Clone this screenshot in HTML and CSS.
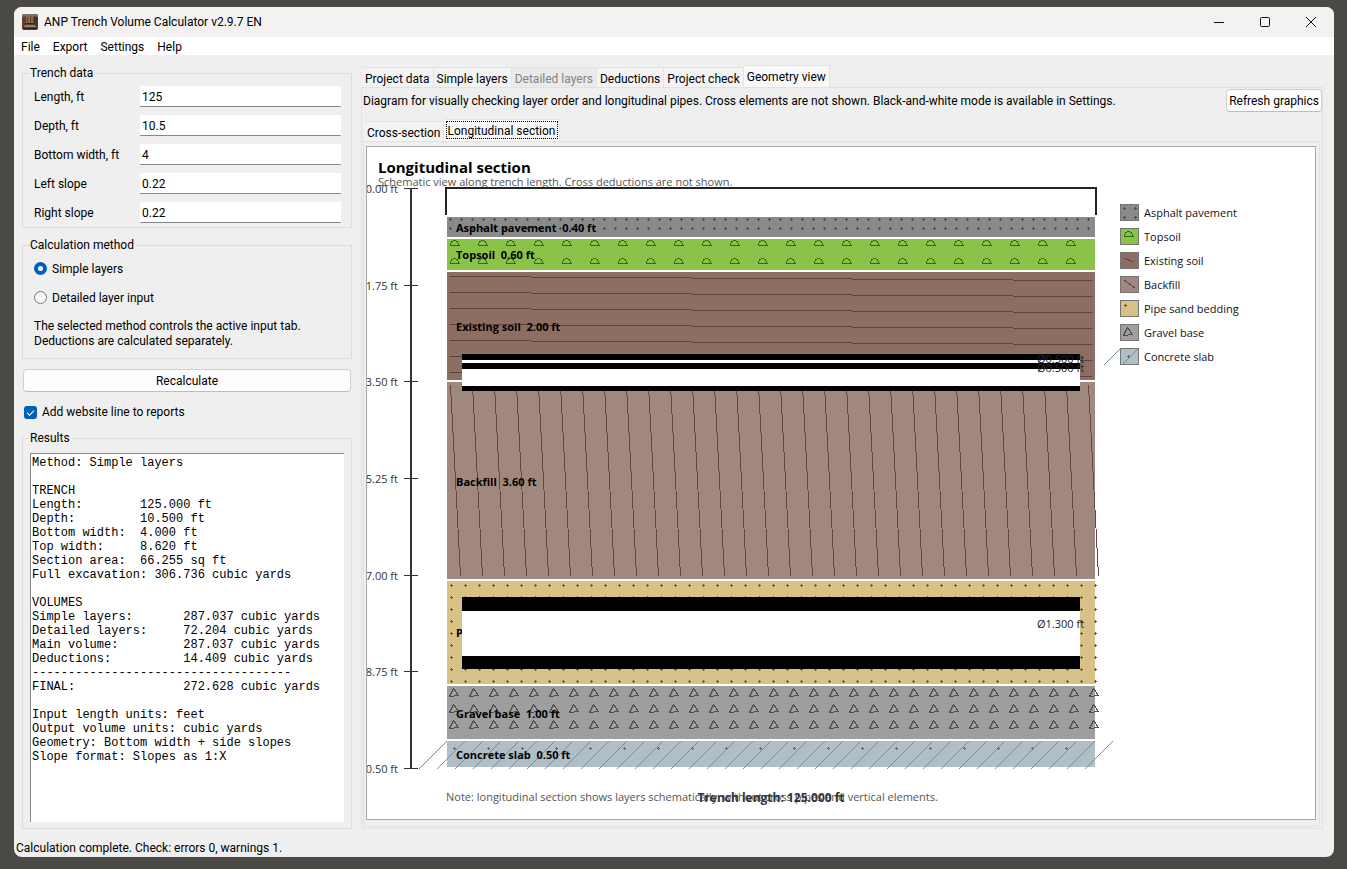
FILE: index.html
```html
<!DOCTYPE html>
<html lang="en">
<head>
<meta charset="utf-8">
<title>ANP Trench Volume Calculator v2.9.7 EN</title>
<link rel="stylesheet" href="styles.css">
</head>
<body>
<div class="window">
  <header class="titlebar">
    <svg class="app-icon" width="16" height="16" viewBox="0 0 16 16" aria-hidden="true">
      <rect width="16" height="16" rx="2" fill="#4f3d30"/>
      <path d="M0 2a2 2 0 0 1 2-2h12a2 2 0 0 1 2 2v2H0z" fill="#77726a"/>
      <path d="M0 3l4-1v8l-4 3z" fill="#5f432e"/>
      <path d="M16 3l-4-1v8l4 3z" fill="#4a3424"/>
      <path d="M4 2h8v7H4z" fill="#8c6a4a"/>
      <path d="M5 3h1v5H5zM8 2h1v6H8zM11 3h1v5h-1z" fill="#5d4028"/>
      <path d="M4 9h8l1 1H3z" fill="#2b201a"/>
      <path d="M3 11h10l1 2H2z" fill="#8f8273"/>
      <path d="M1 14h14v1H1z" fill="#2d211b"/>
    </svg>
    <h1 class="window-title">ANP Trench Volume Calculator v2.9.7 EN</h1>
    <div class="window-controls">
      <button type="button" class="control" aria-label="Minimize"><svg width="12" height="12" viewBox="0 0 12 12"><path d="M1 6.5h10"/></svg></button>
      <button type="button" class="control" aria-label="Maximize"><svg width="12" height="12" viewBox="0 0 12 12"><rect x="1.5" y="1.5" width="9" height="9" rx="1"/></svg></button>
      <button type="button" class="control" aria-label="Close"><svg width="12" height="12" viewBox="0 0 12 12"><path d="M1 1l10 10M11 1L1 11"/></svg></button>
    </div>
  </header>

  <nav class="menubar">
    <button type="button">File</button>
    <button type="button">Export</button>
    <button type="button">Settings</button>
    <button type="button">Help</button>
  </nav>

  <div class="workspace">
    <aside class="sidebar">
      <fieldset class="group trench">
        <legend>Trench data</legend>
        <div class="field"><label for="length">Length, ft</label><input id="length" type="text" value="125"></div>
        <div class="field"><label for="depth">Depth, ft</label><input id="depth" type="text" value="10.5"></div>
        <div class="field"><label for="bottom">Bottom width, ft</label><input id="bottom" type="text" value="4"></div>
        <div class="field"><label for="left">Left slope</label><input id="left" type="text" value="0.22"></div>
        <div class="field"><label for="right">Right slope</label><input id="right" type="text" value="0.22"></div>
      </fieldset>

      <fieldset class="group method">
        <legend>Calculation method</legend>
        <label class="option"><input type="radio" name="method" checked>Simple layers</label>
        <label class="option"><input type="radio" name="method">Detailed layer input</label>
        <p class="hint">The selected method controls the active input tab.<br>Deductions are calculated separately.</p>
      </fieldset>

      <button type="button" class="button recalculate">Recalculate</button>
      <label class="website"><input type="checkbox" checked>Add website line to reports</label>

      <fieldset class="group results">
        <legend>Results</legend>
        <textarea class="report" aria-label="Results" readonly spellcheck="false">Method: Simple layers

TRENCH
Length:        125.000 ft
Depth:         10.500 ft
Bottom width:  4.000 ft
Top width:     8.620 ft
Section area:  66.255 sq ft
Full excavation: 306.736 cubic yards

VOLUMES
Simple layers:       287.037 cubic yards
Detailed layers:     72.204 cubic yards
Main volume:         287.037 cubic yards
Deductions:          14.409 cubic yards
------------------------------------
FINAL:               272.628 cubic yards

Input length units: feet
Output volume units: cubic yards
Geometry: Bottom width + side slopes
Slope format: Slopes as 1:X</textarea>
      </fieldset>
    </aside>

    <main class="notebook">
      <div class="tabs" role="tablist">
        <button type="button" role="tab" class="tab">Project data</button>
        <button type="button" role="tab" class="tab">Simple layers</button>
        <button type="button" role="tab" class="tab" disabled>Detailed layers</button>
        <button type="button" role="tab" class="tab">Deductions</button>
        <button type="button" role="tab" class="tab">Project check</button>
        <button type="button" role="tab" class="tab active" aria-selected="true">Geometry view</button>
      </div>
      <section class="page">
        <div class="info">
          <p>Diagram for visually checking layer order and longitudinal pipes. Cross elements are not shown. Black-and-white mode is available in Settings.</p>
          <button type="button" class="button">Refresh graphics</button>
        </div>
        <div class="tabs inner-tabs" role="tablist">
          <button type="button" role="tab" class="tab">Cross-section</button>
          <button type="button" role="tab" class="tab active focused" aria-selected="true">Longitudinal section</button>
        </div>
        <div class="inner-page">
          <div class="canvas">
            <svg class="diagram" role="img" aria-label="Longitudinal section of the trench">
              <defs>
                <pattern id="asphalt" x="78" y="68" width="11" height="9" patternUnits="userSpaceOnUse">
                  <path class="dot-asphalt" d="M4 4.5h3M5.5 3v3"/>
                </pattern>
                <pattern id="topsoil" x="82" y="92" width="28" height="18" patternUnits="userSpaceOnUse">
                  <path class="hatch-topsoil" d="M.5 6.5h10M1 5.500l1.500-2.500 2-1.500h2l2 1.500 1.500 2.500"/>
                </pattern>
                <pattern id="backfill" x="82" y="235" width="22" height="197" patternUnits="userSpaceOnUse">
                  <path class="hatch-backfill" d="M1.500 3l10 191"/>
                </pattern>
                <pattern id="sand" x="82" y="434" width="14" height="12" patternUnits="userSpaceOnUse">
                  <path class="dot-sand" d="M1 4.500h3M2.500 3v3"/>
                </pattern>
                <pattern id="gravel" x="82" y="540" width="20" height="16" patternUnits="userSpaceOnUse">
                  <path class="hatch-gravel" d="M4.500 1.500l-4 8 9-1z"/>
                </pattern>
                <pattern id="slab" x="82" y="594" width="34" height="26" patternUnits="userSpaceOnUse">
                  <path class="dot-slab" d="M4 7.500h3M5.500 6v3"/>
                </pattern>
              </defs>

              <text class="title" x="11" y="26">Longitudinal section</text>
              <text class="small muted" x="11" y="39">Schematic view along trench length. Cross deductions are not shown.</text>

              <g class="axis">
                <path class="axis-line" d="M44 41v581"/>
                <path class="axis-tick" d="M37 41.500h14M37 138.500h14M37 234.500h14M37 331.500h14M37 428.500h14M37 524.500h14M37 621.500h14"/>
                <text x="31" y="46">0.00 ft</text>
                <text x="31" y="143">1.75 ft</text>
                <text x="31" y="239">3.50 ft</text>
                <text x="31" y="336">5.25 ft</text>
                <text x="31" y="433">7.00 ft</text>
                <text x="31" y="529">8.75 ft</text>
                <text x="31" y="626">10.50 ft</text>
              </g>

              <path class="outline" d="M79 68V41h650v27"/>

              <rect class="asphalt" x="80" y="70" width="648" height="20"/>
              <rect fill="url(#asphalt)" x="80" y="70" width="648" height="16"/>
              <rect class="topsoil" x="80" y="92" width="648" height="31"/>
              <rect fill="url(#topsoil)" x="82" y="92" width="644" height="31"/>
              <rect class="existing" x="80" y="125" width="648" height="108"/>
              <path class="hatch-existing" d="M83 129.500l642 4M83 145.500l642 4M83 161.500l642 4M83 177.500l642 4M83 193.500l642 4M83 209.500l642 4M83 225.500l642 4"/>
              <rect class="backfill" x="80" y="235" width="648" height="197"/>
              <rect fill="url(#backfill)" x="82" y="235" width="660" height="197"/>
              <rect class="sand" x="80" y="434" width="648" height="103"/>
              <rect fill="url(#sand)" x="82" y="434" width="650" height="103"/>
              <rect class="gravel" x="80" y="539" width="648" height="53"/>
              <rect fill="url(#gravel)" x="82" y="540" width="660" height="48"/>
              <rect class="slab" x="80" y="594" width="648" height="26"/>
              <path class="hatch-slab" d="M52 622l28-28m-10 28l28-28m-10 28l28-28m-10 28l28-28m-10 28l28-28m-10 28l28-28m-10 28l28-28m-10 28l28-28m-10 28l28-28m-10 28l28-28m-10 28l28-28m-10 28l28-28m-10 28l28-28m-10 28l28-28m-10 28l28-28m-10 28l28-28m-10 28l28-28m-10 28l28-28m-10 28l28-28m-10 28l28-28m-10 28l28-28m-10 28l28-28m-10 28l28-28m-10 28l28-28m-10 28l28-28m-10 28l28-28m-10 28l28-28m-10 28l28-28m-10 28l28-28m-10 28l28-28m-10 28l28-28m-10 28l28-28m-10 28l28-28m-10 28l28-28m-10 28l28-28m-10 28l28-28m-10 28l28-28m-10 28l28-28"/>
              <rect fill="url(#slab)" x="82" y="594" width="620" height="26"/>

              <g class="layer-name">
                <text x="89" y="85">Asphalt pavement  0.40 ft</text>
                <text x="89" y="112">Topsoil  0.60 ft</text>
                <text x="89" y="184">Existing soil  2.00 ft</text>
                <text x="89" y="339">Backfill  3.60 ft</text>
                <text x="89" y="490">P</text>
                <text x="89" y="571">Gravel base  1.00 ft</text>
                <text x="89" y="612">Concrete slab  0.50 ft</text>
              </g>

              <g class="pipes">
                <rect class="pipe" x="95" y="207" width="618" height="37"/>
                <rect class="bore" x="95" y="213" width="618" height="3"/>
                <rect class="bore" x="95" y="222" width="618" height="17"/>
                <rect class="pipe" x="95" y="450" width="618" height="72"/>
                <rect class="bore" x="95" y="464" width="618" height="45"/>
                <text class="small" x="670" y="216">Ø0.500 ft</text>
                <text class="small" x="670" y="225">Ø0.500 ft</text>
                <text class="small" x="670" y="481">Ø1.300 ft</text>
              </g>

              <text class="small muted" x="79" y="654">Note: longitudinal section shows layers schematically, without cross pipes and vertical elements.</text>
              <text class="span-label" x="404" y="655">Trench length: 125.000 ft</text>

              <g class="legend">
                <rect class="asphalt" x="753.500" y="57.500" width="18" height="16"/>
                <path class="dot-asphalt" d="M756 61.500h3M757.500 60v3M767 61.500h3M768.500 60v3M756 70.500h3M757.500 69v3M767 70.500h3M768.500 69v3"/>
                <text x="777" y="70">Asphalt pavement</text>
                <rect class="topsoil" x="753.500" y="81.500" width="18" height="16"/>
                <path class="hatch-topsoil" d="M756.500 89.500h10M757 88.500l1.500-2.500 2-1.500h2l2 1.500 1.500 2.500"/>
                <text x="777" y="94">Topsoil</text>
                <rect class="existing" x="753.500" y="105.500" width="18" height="16"/>
                <path class="hatch-existing" d="M757 111l9 4"/>
                <text x="777" y="118">Existing soil</text>
                <rect class="backfill" x="753.500" y="129.500" width="18" height="16"/>
                <path class="hatch-existing" d="M757 133l11 8"/>
                <text x="777" y="142">Backfill</text>
                <rect class="sand" x="753.500" y="153.500" width="18" height="16"/>
                <path class="dot-sand" d="M757 158.500h3M758.500 157v3"/>
                <text x="777" y="166">Pipe sand bedding</text>
                <rect class="gravel" x="753.500" y="177.500" width="18" height="16"/>
                <path class="hatch-gravel" d="M760.500 180.500l-4 8 9-1z"/>
                <text x="777" y="190">Gravel base</text>
                <rect class="slab" x="753.500" y="201.500" width="18" height="16"/>
                <path class="hatch-slab" d="M737 218l16-16M755 218l16-16"/>
                <path class="dot-slab" d="M760 209.500h3M761.500 208v3"/>
                <text x="777" y="214">Concrete slab</text>
              </g>
            </svg>
          </div>
        </div>
      </section>
    </main>
  </div>

  <footer class="status">Calculation complete. Check: errors 0, warnings 1.</footer>
</div>
</body>
</html>
```
FILE: styles.css
```css
* { box-sizing: border-box; }

body {
  margin: 0;
  height: 100vh;
  padding: 7px 13px 12px 14px;
  background: #4a4946;
  color: #000;
  font: 12px/16px Roboto, "Open Sans", sans-serif;
}

button, input { font: inherit; color: inherit; }
button { margin: 0; padding: 0; border: 0; background: none; }
p { margin: 0; }

.window {
  height: 100%;
  display: flex;
  flex-direction: column;
  background: #efefef;
  border-radius: 8px;
  overflow: hidden;
}

.titlebar {
  flex: none;
  height: 30px;
  display: flex;
  align-items: center;
  padding-left: 8px;
  background: #f3f2f1;
}
.app-icon { margin-right: 6px; }
.window-title { margin: 0; font-size: 12px; font-weight: 400; }
.window-controls { display: flex; margin-left: auto; align-self: stretch; }
.control { width: 46px; display: grid; place-items: center; }
.control svg { fill: none; stroke: #111; stroke-width: 1; }

.menubar {
  flex: none;
  height: 18px;
  display: flex;
  gap: 13px;
  padding: 1px 0 0 7px;
  background: #fff;
}

.workspace {
  flex: 1;
  min-height: 0;
  display: flex;
  gap: 9px;
  padding: 10px 11px 0 8px;
}

.sidebar {
  flex: none;
  width: 330px;
  display: flex;
  flex-direction: column;
}

.group {
  margin: 0;
  padding: 1px 10px 0 11px;
  border: 1px solid #dcdcdc;
  min-width: 0;
}
.group legend { margin-left: -4px; padding: 0; box-shadow: 2px 0 #efefef; }

.field { height: 29px; display: flex; align-items: center; }
.field label { width: 106px; }
.field input {
  flex: 1;
  min-width: 0;
  height: 21px;
  padding: 2px 2px 0;
  border: 0;
  border-bottom: 1px solid #868686;
  border-radius: 1px;
  background: #fff;
}

.method { margin-top: 9px; padding-bottom: 9px; }
.option { height: 29px; display: flex; align-items: center; gap: 5px; }
.option input {
  appearance: none;
  width: 13px;
  height: 13px;
  margin: 0;
  border: 1px solid #777;
  border-radius: 50%;
  background: #f6f6f6;
}
.option input:checked { border: 4px solid #005fb8; background: #fff; }
.hint { padding-top: 7px; line-height: 15px; }

.button {
  height: 23px;
  border: 1px solid #d0d0d0;
  border-bottom-color: #bdbdbd;
  border-radius: 4px;
  background: #fdfdfd;
  white-space: nowrap;
}
.recalculate { flex: none; margin: 10px 1px 0; }

.website { display: flex; align-items: center; gap: 5px; margin: 12px 2px 0; }
.website input {
  appearance: none;
  width: 13px;
  height: 13px;
  margin: 0;
  display: grid;
  place-items: center;
  border-radius: 3px;
  background: #005fb8;
}
.website input::after {
  content: "";
  width: 6px;
  height: 3px;
  border: solid #fff;
  border-width: 0 0 1px 1px;
  transform: rotate(-45deg);
}

.results {
  flex: 1;
  min-height: 0;
  margin-top: 10px;
  padding: 7px 7px 6px;
  display: flex;
}
.results legend { margin-left: 0; }
.report {
  display: block;
  width: 100%;
  height: 100%;
  padding: 2px 1px;
  border: solid #8c8c8c;
  border-width: 1px 0 0 1px;
  background: #fff;
  resize: none;
  outline: 0;
  white-space: pre;
  overflow: hidden;
  font: 12px/14px "Liberation Mono", monospace;
}

.notebook { flex: 1; min-width: 0; display: flex; flex-direction: column; }
.tabs { flex: none; display: flex; align-items: flex-end; height: 22px; padding-left: 1px; }
.tab {
  height: 20px;
  padding: 2px 3px 0;
  border: 1px solid #e4e4e4;
  border-width: 1px 1px 0 0;
  background: #f3f3f3;
  white-space: nowrap;
}
.tab:disabled { color: #838383; background: #eaeaea; }
.tab.active { height: 22px; padding: 0 3px; background: #f9f9f9; }

.page {
  flex: 1;
  min-height: 0;
  display: flex;
  flex-direction: column;
  padding: 1px 2px 1px 1px;
  border: 1px solid #e2e2e2;
}
.info { display: flex; align-items: center; justify-content: space-between; white-space: nowrap; }
.info .button { padding: 0 2px; margin-right: -2px; }
.inner-tabs { margin-top: 7px; }
.tab.focused { outline: 1px dotted #000; outline-offset: -3px; }

.inner-page {
  flex: 1;
  min-height: 0;
  display: flex;
  padding: 4px 3px 6px 2px;
  border: 1px solid #e2e2e2;
}
.canvas { flex: 1; min-width: 0; border: 1px solid #a8a8a8; background: #fff; }

.diagram { display: block; width: 100%; height: 100%; font-family: "Open Sans", "Noto Sans", sans-serif; }
.diagram text { font-size: 11px; fill: #111; white-space: pre; }
.diagram path { fill: none; stroke-width: 1; shape-rendering: crispEdges; }
.diagram .title { font-size: 15px; font-weight: 700; fill: #000; }
.diagram .small { fill: #222; }
.diagram .muted { fill: #555; }
.diagram .axis text { fill: #333; text-anchor: end; }
.diagram .axis-line { stroke: #333; stroke-width: 2; }
.diagram .axis-tick { stroke: #333; }
.diagram .outline { stroke: #222; stroke-width: 2; }
.diagram .layer-name text { font-size: 11px; font-weight: 700; fill: #000; }
.diagram .span-label { font-size: 12px; font-weight: 700; fill: #333; text-anchor: middle; }

.asphalt { fill: #8a8a8a; }
.topsoil { fill: #8bc34a; }
.existing { fill: #8d6e63; }
.backfill { fill: #a1887f; }
.sand { fill: #d7c187; }
.gravel { fill: #9e9e9e; }
.slab { fill: #b0bec5; }
.pipe { fill: #000; }
.bore { fill: #fff; }
.legend rect { stroke: #757575; }

.dot-asphalt { stroke: #4c4c4c; }
.dot-sand { stroke: #765d1c; }
.dot-slab { stroke: #546e7a; }
.hatch-topsoil { stroke: #33691e; }
.hatch-existing { stroke: #63403a; }
.hatch-backfill { stroke: #64483f; }
.hatch-gravel { stroke: #4f4f4f; }
.hatch-slab { stroke: #78909c; }

.status { flex: none; padding: 11px 2px 1px; }
```
